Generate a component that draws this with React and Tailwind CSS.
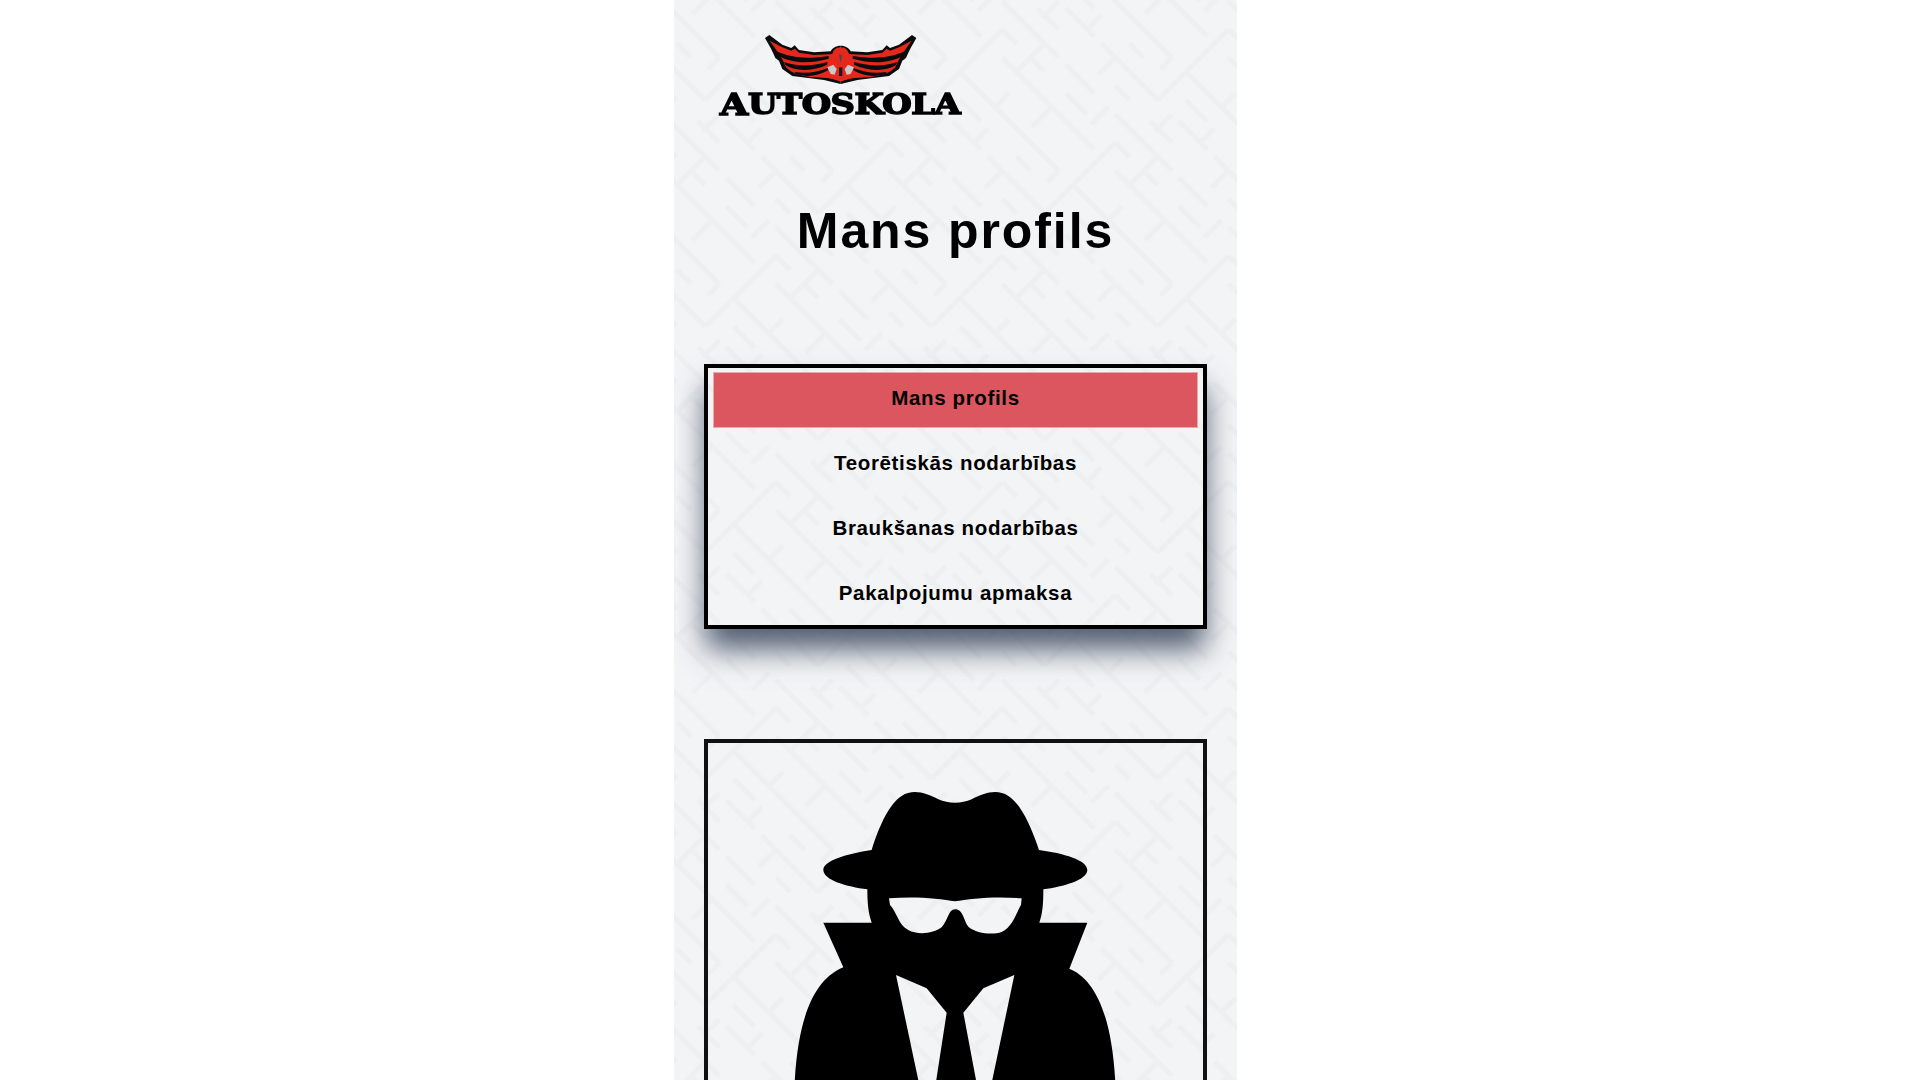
import React from 'react';

const menuItems = ['Mans profils', 'Teorētiskās nodarbības', 'Braukšanas nodarbības', 'Pakalpojumu apmaksa'];

// Faint maze texture behind the column
const MazeBackground = () => (
  <svg className="absolute inset-0 w-full h-full" aria-hidden="true">
    <defs>
      <pattern id="maze" width="160" height="160" patternUnits="userSpaceOnUse" patternTransform="translate(10 -6) rotate(45)">
        <path
          d="M0 20H70M90 20H160M30 40H50M110 40H140M10 60H90M120 60H160M50 80H70M100 80H130M0 100H40M70 100H150M20 120H50M90 120H110M0 140H80M110 140H160M130 120H150M90 0V60M70 20V36M30 60V84M110 60V84M60 100V124M130 100V140M90 120V160M20 140V160M140 0V20M150 40V60M20 0V8"
          fill="none"
          stroke="#eeeff1"
          strokeWidth="5"
        />
      </pattern>
    </defs>
    <rect width="100%" height="100%" fill="url(#maze)" />
  </svg>
);

const WingFeathers = () => (
  <>
    <path d="M510 135C495 135 484 143 480 152L430 155L385 148L372 134L362 142L335 132L296 103L283 112C296 135 306 152 314 172L325 180L335 205L365 226L460 238L510 250Z" fill="#0b0b0b" />
    <path d="M297 120C312 140 326 160 336 178L346 200C365 220 395 230 470 232L510 240V145C495 145 490 150 486 160L430 163L385 156L372 144L362 150L335 140Z" fill="#e4281c" />
    <path d="M318 152C360 172 410 176 474 166L474 174C410 192 360 186 325 166Z" fill="#0b0b0b" />
    <path d="M340 184C380 198 420 198 470 184L470 192C420 214 375 212 345 194Z" fill="#0b0b0b" />
    <path d="M372 214C410 220 440 214 472 202L472 209C440 228 405 230 376 220Z" fill="#0b0b0b" />
  </>
);

const Logo = () => (
  <div className="ml-[45px] w-[243px] flex flex-col items-center pt-[34px] blur-[0.5px]">
    <svg width="152" height="50" viewBox="283 100 456 150">
      <WingFeathers />
      <g transform="matrix(-1 0 0 1 1020 0)">
        <WingFeathers />
      </g>
      <path d="M510 140C495 140 486 150 484 165L470 215L490 236L510 243L530 236L550 215L536 165C534 150 525 140 510 140Z" fill="#e4281c" />
      <path d="M505 162H515L510 188Z" fill="#4a4a4a" />
      <path d="M470 200L488 192L498 205L492 222L480 220Z" fill="#c9c9c9" />
      <path d="M550 200L532 192L522 205L528 222L540 220Z" fill="#c9c9c9" />
      <path d="M505 200H515V226H505Z" fill="#1a1a1a" />
    </svg>
    <div className="mt-[9px] h-[24px] flex items-end scale-x-[1.25] font-['DejaVu_Serif',serif] font-bold leading-none text-black [-webkit-text-stroke:1.5px_black] whitespace-nowrap">
      <span className="text-[29px] leading-[24px]">A</span>
      <span className="text-[27px] leading-[24px] tracking-[-0.4px]">UTOSKOLA</span>
    </div>
  </div>
);

const SpyFigure = () => (
  <svg className="mt-[47px] -ml-[2px] shrink-0" width="330" height="320" viewBox="270 180 990 960">
    <path
      fillRule="evenodd"
      fill="#000"
      d="M370 420C370 392 440 372 515 360C540 280 570 220 605 198C640 175 680 190 715 208C745 222 785 222 815 208C850 190 890 175 925 198C960 220 990 280 1017 360C1090 370 1162 390 1162 420C1162 450 1090 470 1030 478C1030 520 1028 550 1018 578L1162 578L1108 716C1180 745 1248 850 1248 1140L858 1140L943 735L850 775L790 848L845 1140L695 1140L740 848L680 775L588 735L674 1140L282 1140C282 850 350 745 430 712L370 578L515 578C505 550 502 520 502 478C440 470 370 450 370 420ZM567 505C640 498 720 505 765 514C810 505 890 498 965 505L963 525C950 545 940 590 905 606C880 615 830 612 805 590C790 570 790 538 765 538C745 538 745 570 725 592C700 612 650 615 625 600C595 585 590 545 570 525Z"
    />
  </svg>
);

export default function App() {
  return (
    <div className="h-screen bg-white overflow-hidden font-['Liberation_Sans',Arial,sans-serif] text-black">
      <div className="relative ml-[674px] w-[563px] h-full bg-[#f3f4f6] overflow-hidden">
        <MazeBackground />
        <div className="relative flex flex-col">
          <Logo />
          <h1 className="mt-[86px] text-center text-[50px] leading-[56px] font-bold tracking-[1.9px]">Mans profils</h1>
          <nav className="mt-[105px] mx-[30px] h-[265px] border-4 border-black flex flex-col gap-[9px] px-[5px] pt-[4px] shadow-[0_22px_28px_-2px_rgba(40,55,80,0.8)]">
            {menuItems.map((item, i) => (
              <div
                key={item}
                className={`h-[56px] shrink-0 flex items-center justify-center pb-[4px] text-[20.5px] font-bold tracking-[0.65px] ${i === 0 ? 'bg-[#dc5660] border border-[#eda6ab]' : ''}`}
              >
                {item}
              </div>
            ))}
          </nav>
          <section className="mt-[110px] mx-[30px] h-[500px] border-4 border-[#111] flex justify-center">
            <SpyFigure />
          </section>
        </div>
      </div>
    </div>
  );
}
